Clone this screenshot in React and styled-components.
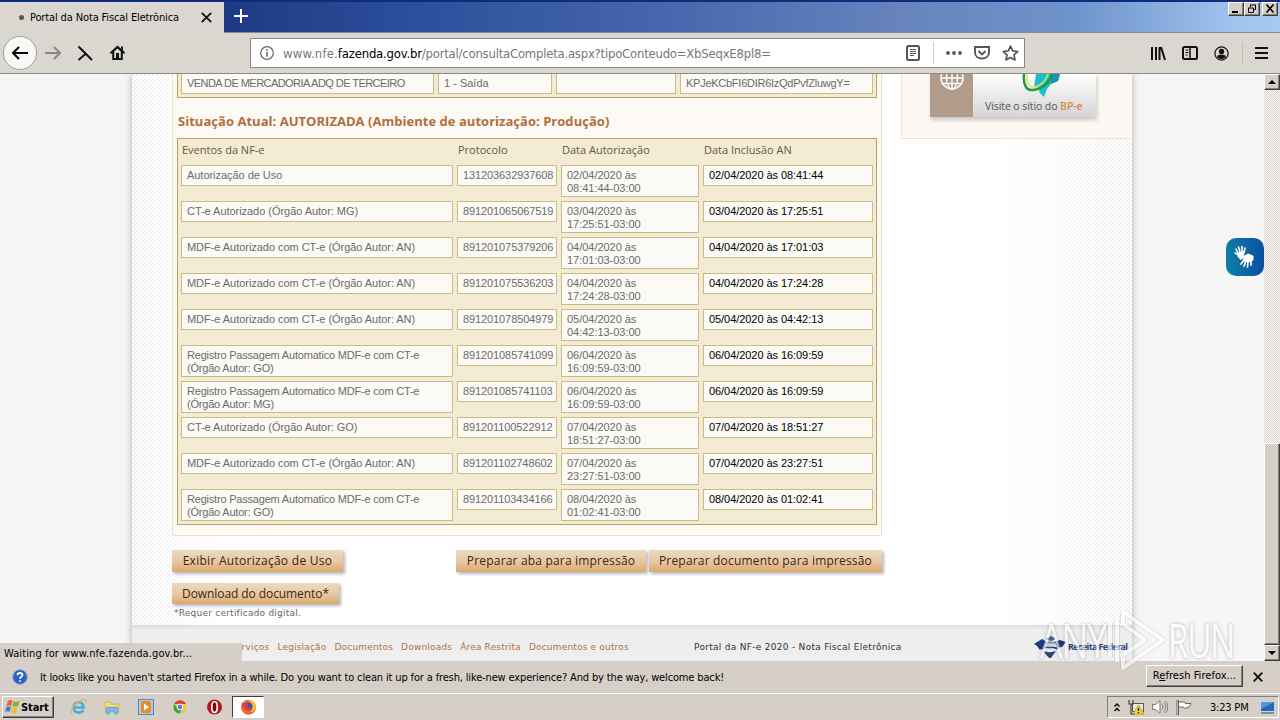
import React from "react";
import styled, { createGlobalStyle, css } from "styled-components";

const events = [
  ["Autorização de Uso", "131203632937608", "02/04/2020 às", "08:41:44-03:00", "02/04/2020 às 08:41:44"],
  ["CT-e Autorizado (Órgão Autor: MG)", "891201065067519", "03/04/2020 às", "17:25:51-03:00", "03/04/2020 às 17:25:51"],
  ["MDF-e Autorizado com CT-e (Órgão Autor: AN)", "891201075379206", "04/04/2020 às", "17:01:03-03:00", "04/04/2020 às 17:01:03"],
  ["MDF-e Autorizado com CT-e (Órgão Autor: AN)", "891201075536203", "04/04/2020 às", "17:24:28-03:00", "04/04/2020 às 17:24:28"],
  ["MDF-e Autorizado com CT-e (Órgão Autor: AN)", "891201078504979", "05/04/2020 às", "04:42:13-03:00", "05/04/2020 às 04:42:13"],
  ["Registro Passagem Automatico MDF-e com CT-e\n(Órgão Autor: GO)", "891201085741099", "06/04/2020 às", "16:09:59-03:00", "06/04/2020 às 16:09:59"],
  ["Registro Passagem Automatico MDF-e com CT-e\n(Órgão Autor: MG)", "891201085741103", "06/04/2020 às", "16:09:59-03:00", "06/04/2020 às 16:09:59"],
  ["CT-e Autorizado (Órgão Autor: GO)", "891201100522912", "07/04/2020 às", "18:51:27-03:00", "07/04/2020 às 18:51:27"],
  ["MDF-e Autorizado com CT-e (Órgão Autor: AN)", "891201102748602", "07/04/2020 às", "23:27:51-03:00", "07/04/2020 às 23:27:51"],
  ["Registro Passagem Automatico MDF-e com CT-e\n(Órgão Autor: GO)", "891201103434166", "08/04/2020 às", "01:02:41-03:00", "08/04/2020 às 01:02:41"],
];

const footerLinks = ["Serviços", "Legislação", "Documentos", "Downloads", "Área Restrita", "Documentos e outros"];

export default function App() {
  return (
    <Screen>
      <GlobalStyle />
      <TitleBar>
        <Tab>
          <TabDot />
          <TabTitle>Portal da Nota Fiscal Eletrônica</TabTitle>
          <CrossIcon size={11} width={1.6} />
        </Tab>
        <NewTab>
          <svg width="14" height="14" viewBox="0 0 14 14" stroke="#fff" strokeWidth="2">
            <path d="M7 0v14M0 7h14" />
          </svg>
        </NewTab>
        <WindowButtons>
          <WindowButton>
            <svg width="10" height="9"><path d="M1 8h6" stroke="#000" strokeWidth="2" /></svg>
          </WindowButton>
          <WindowButton>
            <svg width="10" height="9" fill="none" stroke="#000">
              <path d="M3 1h6M3.500 1v2M8.500 1v4.500H6.500M1 4h5.500M1.500 4v4.500h5V4" />
            </svg>
          </WindowButton>
          <WindowButton $gap>
            <svg width="10" height="9"><path d="M1.500 .5l7 8M8.500 .5l-7 8" stroke="#000" strokeWidth="1.600" /></svg>
          </WindowButton>
        </WindowButtons>
      </TitleBar>

      <NavBar>
        <BackButton>
          <ArrowIcon />
        </BackButton>
        <NavIcon $left={8} $faded>
          <ArrowIcon flip />
        </NavIcon>
        <NavIcon $left={16}>
          <svg width="16" height="16" fill="none" stroke="#111" strokeWidth="2">
            <path d="M1.500 1.500L15 15M9 8.500L1.500 15" />
          </svg>
        </NavIcon>
        <NavIcon $left={16}>
          <svg width="17" height="16" viewBox="0 0 17 16">
            <path d="M8.500 .5L.8 7.600l1.200 1.300 1.200-1V15h10.600V7.900l1.200 1 1.200-1.300L14 5.400V1.500h-2v2.200z" fill="#111" />
            <path d="M5.200 6.600L8.500 3.500l3.300 3.100v6.500H5.200z" fill="#dad7d1" />
            <path d="M7 8h3v5.500H7z" fill="#111" />
          </svg>
        </NavIcon>
        <UrlBar>
          <svg width="14" height="14" fill="none" stroke="#666">
            <circle cx="7" cy="7" r="6.300" strokeWidth="1.200" />
            <path d="M7 3.200v1.700M7 6v4.800" strokeWidth="1.600" />
          </svg>
          <Url>
            <UrlPrefix>www.nfe.</UrlPrefix>
            <UrlHost>fazenda.gov.br</UrlHost>
            <UrlPath>/portal/consultaCompleta.aspx?tipoConteudo=XbSeqxE8pl8=</UrlPath>
          </Url>
          <UrlActions>
            <svg width="14" height="16" fill="none" stroke="#555">
              <rect x="1" y="1" width="12" height="14" rx="1.500" strokeWidth="2" />
              <path d="M4 4.500h6M4 6.500h6M4 8.500h6M4 10.500h4" />
            </svg>
            <UrlDivider />
            <svg width="16" height="4" fill="#555">
              <circle cx="2" cy="2" r="1.900" /><circle cx="8" cy="2" r="1.900" /><circle cx="14" cy="2" r="1.900" />
            </svg>
            <svg width="16" height="14" fill="none" stroke="#555" strokeWidth="1.900">
              <path d="M1 1h14v5.500c0 8-14 8-14 0zM4.500 5L8 8.500 11.500 5" />
            </svg>
            <svg width="17" height="16" fill="none" stroke="#555" strokeWidth="1.700" strokeLinejoin="round">
              <path d="M8.500 1.200l2.200 4.700 5 .6-3.700 3.400 1 5-4.500-2.500L4 14.900l1-5L1.300 6.500l5-.6z" />
            </svg>
          </UrlActions>
        </UrlBar>
        <ToolbarIcons>
          <svg width="16" height="15" stroke="#111" strokeWidth="2">
            <path d="M2 1v13M6 1v13M9.500 1v13M11 1l4 13" />
          </svg>
          <svg width="16" height="14" fill="none" stroke="#111">
            <rect x="1" y="1" width="14" height="12" rx="1.500" strokeWidth="2" />
            <path d="M8 1v12" strokeWidth="1.500" /><path d="M3.500 4h3M3.500 6.500h3M3.500 9h2" />
          </svg>
          <svg width="15" height="15" fill="#111">
            <circle cx="7.500" cy="7.500" r="6.600" fill="none" stroke="#111" strokeWidth="1.200" />
            <circle cx="7.500" cy="5.500" r="2.700" />
            <path d="M3 11c.5-2 2-2.600 4.500-2.600S11.500 9 12 11c-2 2.600-7 2.600-9 0z" />
          </svg>
          <MenuDivider />
          <svg width="13" height="12" stroke="#111" strokeWidth="2">
            <path d="M0 1h13M0 6h13M0 11h13" />
          </svg>
        </ToolbarIcons>
      </NavBar>

      <Viewport>
        <PageArea>
          <Sheet>
            <SheetBody>
              <MainColumn>
                <MainPanel>
                  <InfoBox>
                    <Field $spacing={-0.55}>VENDA DE MERCADORIA ADQ DE TERCEIRO</Field>
                    <Field>1 - Saída</Field>
                    <Field />
                    <Field $spacing={-0.26}>KPJeKCbFI6DIR6IzQdPvfZluwgY=</Field>
                  </InfoBox>
                  <Status>Situação Atual: AUTORIZADA (Ambiente de autorização: Produção)</Status>
                  <EventsBox>
                    <EventsHead>
                      <span>Eventos da NF-e</span>
                      <span>Protocolo</span>
                      <span>Data Autorização</span>
                      <span>Data Inclusão AN</span>
                    </EventsHead>
                    {events.map((event) => (
                      <EventRow key={event[1]}>
                        <Field $spacing={event[0].includes("\n") ? -0.2 : -0.04}>{event[0]}</Field>
                        <Field $spacing={-0.1}>{event[1]}</Field>
                        <Field $spacing={-0.03}>{event[2] + "\n" + event[3]}</Field>
                        <Field $spacing={-0.06} $dark>{event[4]}</Field>
                      </EventRow>
                    ))}
                  </EventsBox>
                </MainPanel>
                <Actions>
                  <ActionButton $width={171} $spacing={0.28}>Exibir Autorização de Uso</ActionButton>
                  <ActionGroup>
                    <ActionButton $width={190}>Preparar aba para impressão</ActionButton>
                    <ActionButton $width={233}>Preparar documento para impressão</ActionButton>
                  </ActionGroup>
                </Actions>
                <ActionButton $width={167} $spacing={-0.08} $short>Download do documento*</ActionButton>
                <Note>*Requer certificado digital.</Note>
              </MainColumn>
              <SidePanel>
                <Banner>
                  <BannerIcon>
                    <svg width="24" height="24" fill="none" stroke="#fff" strokeWidth="1.400">
                      <circle cx="12" cy="12" r="11" />
                      <ellipse cx="12" cy="12" rx="5.500" ry="11" />
                      <path d="M12 1v22M1 12h22M3 6.500h18M3 17.500h18" />
                    </svg>
                  </BannerIcon>
                  <BannerBody>
                    <svg width="42" height="26" viewBox="0 0 42 26">
                      <path d="M14 0h24l-2 7-7 3-4 5-3 8-5-5 1-4-6-1z" fill="#18bfd0" />
                      <path d="M28 0h10l-2 7-7 3z" fill="#1597b4" />
                      <path d="M2 0c-1 10 2 17 9 16C21 15 28 8 30 0" fill="none" stroke="#1d9a43" strokeWidth="2.500" />
                      <path d="M5 0c-1 8 2 13 6 13C18 13 24 7 26 0" fill="none" stroke="#e3e04c" strokeWidth="1.500" />
                    </svg>
                    <BannerText>Visite o sítio do <b>BP-e</b></BannerText>
                  </BannerBody>
                </Banner>
              </SidePanel>
            </SheetBody>
            <Footer>
              <FooterLinks>
                {footerLinks.map((link) => <a key={link}>{link}</a>)}
              </FooterLinks>
              <FooterTitle>Portal da NF-e 2020 - Nota Fiscal Eletrônica</FooterTitle>
              <Receita>
                <svg width="32" height="22" viewBox="0 0 32 22">
                  <path d="M0 8l8-5 5 3-3 4-4 4-3-4z" fill="#1c3a7c" />
                  <path d="M11 3l6-3 5 3-5 2z" fill="#48688f" />
                  <path d="M20 6l6-2 6 2-4 5-5 1z" fill="#1c3a7c" />
                  <ellipse cx="16" cy="9" rx="5.500" ry="3.500" fill="#8298b8" />
                  <path d="M9 15c4 1.500 9 1.500 13 0l-5 7h-2z" fill="#284783" />
                  <path d="M7 13c5-3 12-3 17 0" fill="none" stroke="#284783" strokeWidth="2" />
                </svg>
                <span>Receita Federal</span>
              </Receita>
            </Footer>
          </Sheet>
          <StatusPopup>Waiting for www.nfe.fazenda.gov.br...</StatusPopup>
          <Libras>
            <svg width="22" height="24" viewBox="0 0 22 24" fill="#fff" stroke="#fff" strokeLinecap="round">
              <path d="M4 8l-2-4M6 7L4.500 2M8 7V1.500M10 8l1-5M5 10L1 8" strokeWidth="1.600" />
              <path d="M3.500 8l6-1.500L10 10l-3 5-3-3z" strokeWidth=".5" />
              <path d="M9 12l5-3 5 2v4l-4 2-5-1z" strokeWidth="1" />
              <path d="M10 15l-3 4M12 16l-2 5M14 16l-.5 6M17 15v5" strokeWidth="1.700" />
            </svg>
          </Libras>
        </PageArea>
        <Scrollbar>
          <ScrollButton><svg width="8" height="4"><path d="M0 4l4-4 4 4z" /></svg></ScrollButton>
          <ScrollTrack><ScrollThumb /></ScrollTrack>
          <ScrollButton><svg width="8" height="4"><path d="M0 0l4 4 4-4z" /></svg></ScrollButton>
        </Scrollbar>
      </Viewport>

      <Notification>
        <svg width="16" height="16">
          <circle cx="8" cy="8" r="7.300" fill="#2b62c4" stroke="#8ea7d4" />
          <path d="M5.500 6.300c0-3 5-3 5-.3 0 1.800-2.500 1.800-2.500 3.700M8 11.300v1.500" fill="none" stroke="#fff" strokeWidth="1.800" />
        </svg>
        <NotificationText>
          It looks like you haven't started Firefox in a while. Do you want to clean it up for a fresh, like-new experience? And by the way, welcome back!
        </NotificationText>
        <RefreshButton>R<u>e</u>fresh Firefox...</RefreshButton>
        <CrossIcon size={10} width={1.9} />
      </Notification>

      <Taskbar>
        <StartButton>
          <svg width="16" height="16" viewBox="0 0 16 16">
            <path d="M3 2c2-1.500 3-1 4.500-.2L6.300 7C4.800 6 3.300 6.300 1.500 7.200z" fill="#e8622a" />
            <path d="M8.500 2.300c2 1 3.500.8 6-.3l-1.500 5c-2 1-3.800 1-5.500.3z" fill="#79b33c" />
            <path d="M1.300 8.200c1.700-1 3.200-1 4.700-.2l-1.400 5C3.200 12 1.800 12.200 0 13z" fill="#3d7fd0" />
            <path d="M7.200 8.500c2 .9 3.500.8 5.500-.2l-1.500 5.200c-2 1-3.800.9-5.400 0z" fill="#f5bd2e" />
          </svg>
          <span>Start</span>
        </StartButton>
        <TaskIcon>
          <svg width="17" height="16" viewBox="0 0 17 16" fill="none">
            <path d="M4 8.500h9.500C13.500 1.500 3.700 1.500 3.700 8.500c0 6 7.500 6.500 9.500 2.500" stroke="#43aee0" strokeWidth="2.600" />
            <path d="M2 14.500C-2 10 11-1.500 15.500 1c1 .7.500 2.200 0 3" stroke="#e6b93e" strokeWidth="1.300" />
          </svg>
        </TaskIcon>
        <TaskIcon>
          <svg width="16" height="15">
            <path d="M1 2h6l1 2h7v8H1z" fill="#f0d67c" stroke="#d6b552" />
            <path d="M2.500 14V7.500h11V14h-3v-3h-5v3z" fill="#7cc0e8" stroke="#5aa2d2" />
          </svg>
        </TaskIcon>
        <TaskIcon>
          <svg width="16" height="16">
            <rect x=".5" y=".5" width="15" height="15" fill="#a8cdec" stroke="#5288c0" />
            <rect x="3" y="2" width="10" height="12" rx="2" fill="#f08a1c" />
            <path d="M6 4.500L11 8l-5 3.500z" fill="#fff" />
          </svg>
        </TaskIcon>
        <TaskIcon>
          <svg width="14" height="14">
            <circle cx="7" cy="7" r="6.500" fill="#f5c534" />
            <path d="M1.200 4A6.500 6.500 0 0 1 12.900 4H7z" fill="#dc4437" />
            <path d="M1.200 4A6.500 6.500 0 0 0 6.500 13.500L9 9 4 8z" fill="#35a253" />
            <circle cx="7" cy="7" r="3.200" fill="#fff" /><circle cx="7" cy="7" r="2.400" fill="#4a86e8" />
          </svg>
        </TaskIcon>
        <TaskIcon>
          <svg width="15" height="16">
            <circle cx="7.500" cy="8" r="7.500" fill="#b5171d" />
            <ellipse cx="7.500" cy="8" rx="2.700" ry="5.500" fill="#7a090c" stroke="#fff" strokeWidth="1.700" />
          </svg>
        </TaskIcon>
        <TaskIcon $active>
          <svg width="17" height="16">
            <circle cx="8.500" cy="8.300" r="7.500" fill="#f4662a" />
            <path d="M8 1c5 0 8 3 8 7-1 4-4 5-6 5 4-3 2-8-2-12z" fill="#fbbd2c" />
            <circle cx="8.500" cy="7.500" r="4" fill="#3458b4" />
            <path d="M1.500 5l2-2 2 1.500 3 .5-2 2c1 2 3 2 5 1-1 4-6 4-8 1z" fill="#ec3c3a" />
          </svg>
        </TaskIcon>
        <Tray>
          <svg width="6" height="9" fill="none" stroke="#000" strokeWidth="1.300">
            <path d="M.5 3.500L3 1l2.500 2.500M.5 8L3 5.500 5.500 8" />
          </svg>
          <svg width="16" height="16">
            <path d="M4.500 4.500h11v8h-11z" fill="#e8e8e8" stroke="#555" />
            <path d="M1 1v4h4V1M3 5v10h4" fill="none" stroke="#444" strokeWidth="1.200" />
            <path d="M10.500 6L16 15H5z" fill="#f8d62c" stroke="#a88a10" strokeWidth=".7" />
            <path d="M10.500 9v3M10.500 13v1" stroke="#000" strokeWidth="1.200" />
          </svg>
          <svg width="16" height="14" fill="none" stroke="#777">
            <path d="M.5 4.500h3L8 .8v12.400L3.500 9.500h-3z" fill="#fff" />
            <path d="M10 4.500c1.300 1 1.300 4 0 5M11.500 2.500c3 2 3 7 0 9M13.200 1c3.500 3 3.500 9 0 12" />
          </svg>
          <svg width="16" height="15" fill="#fff" stroke="#666">
            <path d="M1 .5h1.500V15H1zM2.500 2h6l.8 1.500H15L13 7l-4.500 1.500-1-1.500h-5z" />
          </svg>
          <Clock>3:23 PM</Clock>
          <svg width="15" height="13">
            <rect x=".5" y=".5" width="14" height="10" fill="#2467bb" stroke="#c3d6ea" />
            <path d="M1 1h13L1 8z" fill="#5795d8" /><path d="M1 12h13" stroke="#444" />
          </svg>
        </Tray>
      </Taskbar>

      <Watermark>
        <WatermarkWord $scale={0.77}>ANY</WatermarkWord>
        <svg width="62" height="66" viewBox="0 0 62 66" fill="none" strokeLinejoin="round">
          <path d="M17 5L57 33 17 61V50M17 17V5M17 17L39 33 17 48M4 16V50M11 11V55" stroke="#999" strokeWidth="6" opacity=".35" />
          <path d="M17 5L57 33 17 61V50M17 17V5M17 17L39 33 17 48M4 16V50M11 11V55" stroke="#fff" strokeWidth="4" />
        </svg>
        <WatermarkWord $scale={0.71}>RUN</WatermarkWord>
      </Watermark>
    </Screen>
  );
}

function CrossIcon({ size, width }) {
  return (
    <svg width={size} height={size} viewBox="0 0 10 10" stroke="#111" strokeWidth={width}>
      <path d="M.7 .7l8.600 8.600M9.300 .7L.7 9.300" />
    </svg>
  );
}

function ArrowIcon({ flip }) {
  return (
    <svg width="16" height="14" fill="none" stroke="currentColor" strokeWidth="2">
      <path d={flip ? "M0 7h14.500M9 1l6 6-6 6" : "M16 7H1.500M7 1L1 7l6 6"} />
    </svg>
  );
}

const GlobalStyle = createGlobalStyle`
  body {
    margin: 0;
    overflow: hidden;
  }
  * {
    box-sizing: border-box;
  }
  svg {
    display: block;
    flex: none;
  }
`;

const uiFont = css`
  font-family: "DejaVu Sans Condensed", "DejaVu Sans", sans-serif;
  font-stretch: condensed;
  font-size: 11px;
  white-space: nowrap;
`;

const raised = css`
  background: #d6cfc7;
  border: 1px solid;
  border-color: #fff #404040 #404040 #fff;
  box-shadow: inset -1px -1px #808080;
`;

const Screen = styled.div`
  position: relative;
  width: 1280px;
  height: 720px;
  display: flex;
  flex-direction: column;
  overflow: hidden;
  background: #d6cfc7;
  color: #000;
`;

const TitleBar = styled.div`
  height: 33px;
  flex: none;
  display: flex;
  border-top: 2px solid #0c2c7c;
  border-bottom: 1px solid #8a8a92;
  background: linear-gradient(90deg, #1f3a84 18%, #2a4b98 30%, #4667ae 52%, #6683bd 70%, #6f93cc 84%, #a0c5ef 97%, #a6caf0);
`;

const Tab = styled.div`
  width: 224px;
  height: 31px;
  display: flex;
  align-items: center;
  padding-left: 19px;
  background: #dad7d1;
`;

const TabDot = styled.div`
  width: 5px;
  height: 5px;
  border-radius: 50%;
  background: #555;
`;

const TabTitle = styled.div`
  ${uiFont}
  width: 177px;
  padding-left: 6px;
  letter-spacing: -0.13px;
`;

const NewTab = styled.div`
  padding: 7px 0 0 10px;
`;

const WindowButtons = styled.div`
  display: flex;
  margin-left: auto;
  margin-right: 2px;
`;

const WindowButton = styled.div`
  ${raised}
  width: 16px;
  height: 14px;
  padding: 1px 2px;
  margin-left: ${(props) => (props.$gap ? "2px" : "0")};
`;

const NavBar = styled.div`
  height: 41px;
  flex: none;
  display: flex;
  align-items: center;
  padding-left: 3px;
  background: #dad7d1;
  border-bottom: 1px solid #8c8a87;
`;

const BackButton = styled.div`
  width: 34px;
  height: 34px;
  display: flex;
  align-items: center;
  justify-content: center;
  border: 1px solid #a19f9b;
  border-radius: 50%;
  background: #f8f8f7;
`;

const NavIcon = styled.div`
  margin-left: ${(props) => props.$left}px;
  color: ${(props) => (props.$faded ? "#8a8885" : "#111")};
`;

const UrlBar = styled.div`
  width: 775px;
  height: 30px;
  display: flex;
  align-items: center;
  margin-left: 124px;
  padding-left: 9px;
  border: 1px solid #8c8a87;
  background: #fff;
`;

const Url = styled.div`
  ${uiFont}
  display: flex;
  width: 629px;
  padding-left: 9px;
  font-size: 13px;
  color: #777;
`;

const UrlPrefix = styled.span`
  letter-spacing: 0.15px;
`;

const UrlHost = styled.span`
  color: #000;
  letter-spacing: -0.2px;
`;

const UrlPath = styled.span`
  letter-spacing: -0.23px;
`;

const UrlActions = styled.div`
  display: flex;
  align-items: center;
  gap: 12px;
  padding-left: 3px;
`;

const UrlDivider = styled.div`
  width: 1px;
  height: 22px;
  margin-left: 1px;
  background: #d0d0d0;
`;

const ToolbarIcons = styled.div`
  display: flex;
  align-items: center;
  gap: 16px;
  margin-left: 125px;
`;

const MenuDivider = styled.div`
  width: 1px;
  height: 22px;
  margin: 0 -4px 0 -3px;
  background: #c1beb8;
`;

const Viewport = styled.div`
  height: 587px;
  flex: none;
  display: flex;
`;

const PageArea = styled.div`
  position: relative;
  width: 1264px;
  overflow: hidden;
  display: flex;
  justify-content: center;
  background: #f6f6f6;
`;

const Sheet = styled.div`
  width: 1000px;
  display: flex;
  flex-direction: column;
  box-shadow: 0 0 7px rgba(0, 0, 0, 0.3);
  background:
    linear-gradient(90deg, rgba(255, 255, 255, 0.2) 0, #fff 90px, #fff 860px, rgba(255, 255, 255, 0.2)),
    radial-gradient(circle at 1px 1px, #ebebeb 0.800px, transparent 1.200px) 0 0 / 4px 4px,
    radial-gradient(circle at 3px 3px, #ededed 0.800px, transparent 1.200px) 0 0 / 4px 4px,
    #fff;
`;

const SheetBody = styled.div`
  height: 551px;
  display: flex;
  align-items: flex-start;
  padding-left: 40px;
  gap: 19px;
`;

const MainColumn = styled.div`
  width: 710px;
  display: flex;
  flex-direction: column;
`;

const MainPanel = styled.div`
  height: 462px;
  padding: 0 4px;
  border: 1px solid #eee3c8;
  border-top: 0;
  background: #fdfaf6;
`;

const InfoBox = styled.div`
  height: 24px;
  display: grid;
  grid-template-columns: 253px 114px 120px 193px;
  gap: 4px;
  padding: 0 3px 3px;
  border: 1px solid #b9a261;
  border-top: 0;
  background: #f3ebd3;
  > div {
    border-top: 0;
  }
`;

const Field = styled.div`
  min-height: 20px;
  padding: 3px 0 1px 5px;
  border: 1px solid #cbbb88;
  background: #fbfaf5;
  font: 11px/13px "Liberation Sans", Arial, sans-serif;
  letter-spacing: ${(props) => props.$spacing || 0}px;
  color: ${(props) => (props.$dark ? "#000" : "#6b6b6b")};
  white-space: pre;
`;

const Status = styled.div`
  height: 40px;
  padding-left: 1px;
  font: bold 13px/47px "Open Sans", sans-serif;
  letter-spacing: 0.03px;
  white-space: nowrap;
  color: #b06f3c;
`;

const EventsBox = styled.div`
  height: 387px;
  display: flex;
  flex-direction: column;
  gap: 4px;
  padding: 0 3px;
  border: 1px solid #b9a261;
  background: #f3ebd3;
`;

const EventsHead = styled.div`
  height: 22px;
  display: grid;
  grid-template-columns: 272px 100px 138px 170px;
  gap: 4px;
  padding-left: 1px;
  font: 11px/21px "Open Sans", sans-serif;
  color: #66593b;
`;

const EventRow = styled.div`
  height: 32px;
  display: grid;
  grid-template-columns: 272px 100px 138px 170px;
  gap: 4px;
  align-items: start;
  ${Field} {
    min-height: 21px;
  }
`;

const Actions = styled.div`
  display: flex;
  justify-content: space-between;
  padding: 14px 0 11px;
`;

const ActionGroup = styled.div`
  display: flex;
  gap: 3px;
`;

const ActionButton = styled.div`
  width: ${(props) => props.$width}px;
  height: ${(props) => (props.$short ? 21 : 22)}px;
  text-align: center;
  background: linear-gradient(#ecd9c2, #e8c9a3 50%, #dba970);
  box-shadow: 2px 2px 3px rgba(90, 90, 110, 0.45);
  font: 12px/21px "Open Sans", sans-serif;
  letter-spacing: ${(props) => props.$spacing || 0.18}px;
  white-space: nowrap;
  color: #3c2614;
`;

const Note = styled.div`
  padding: 3px 0 0 2px;
  font: 9px/12px "DejaVu Sans", sans-serif;
  letter-spacing: 0.23px;
  color: #666;
`;

const SidePanel = styled.div`
  width: 231px;
  height: 65px;
  padding-left: 28px;
  border: solid #f0e3cc;
  border-width: 0 0 1px 1px;
  background: #fcf9f5;
`;

const Banner = styled.div`
  width: 166px;
  height: 43px;
  display: flex;
  box-shadow: 1px 3px 4px rgba(0, 0, 0, 0.2);
`;

const BannerIcon = styled.div`
  width: 43px;
  overflow: hidden;
  background: #b19c8c;
  svg {
    margin: -8px 0 0 10px;
  }
`;

const BannerBody = styled.div`
  flex: 1;
  background: linear-gradient(#fff, #d6d4d6);
  svg {
    margin-left: 49px;
  }
`;

const BannerText = styled.div`
  padding-left: 12px;
  font: 10.5px/12px "Open Sans", sans-serif;
  letter-spacing: -0.08px;
  white-space: nowrap;
  color: #555;
  b {
    font-weight: 600;
    color: #d98a4a;
  }
`;

const Footer = styled.div`
  height: 36px;
  display: flex;
  align-items: center;
  padding-top: 8px;
  font: 9px/12px "DejaVu Sans", sans-serif;
  white-space: nowrap;
  background: linear-gradient(#dcdcdc, #eee 5px);
`;

const FooterLinks = styled.div`
  width: 562px;
  display: flex;
  gap: 8px;
  padding-left: 98px;
  letter-spacing: 0.18px;
  color: #ad734b;
`;

const FooterTitle = styled.div`
  width: 340px;
  letter-spacing: 0.29px;
  color: #333;
`;

const Receita = styled.div`
  display: flex;
  align-items: center;
  gap: 2px;
  font: bold 9px/12px "Open Sans", sans-serif;
  letter-spacing: -0.65px;
  color: #2a4381;
`;

const StatusPopup = styled.div`
  ${uiFont}
  position: absolute;
  left: 0;
  bottom: 0;
  width: 242px;
  height: 18px;
  padding-left: 4px;
  line-height: 21px;
  letter-spacing: 0.11px;
  background: #d6cfc7;
`;

const Libras = styled.div`
  position: absolute;
  top: 164px;
  right: 0;
  width: 38px;
  height: 38px;
  display: flex;
  align-items: center;
  justify-content: center;
  border-radius: 10px;
  background: linear-gradient(90deg, #0f7fa6, #0b4fa0);
`;

const Scrollbar = styled.div`
  width: 16px;
  display: flex;
  flex-direction: column;
`;

const ScrollButton = styled.div`
  ${raised}
  height: 16px;
  display: flex;
  align-items: center;
  justify-content: center;
`;

const ScrollTrack = styled.div`
  flex: 1;
  display: flex;
  padding-top: 353px;
  background: repeating-conic-gradient(#fff 0 25%, #d6cfc7 0 50%) 0 0 / 2px 2px;
`;

const ScrollThumb = styled.div`
  ${raised}
  width: 16px;
  height: 202px;
`;

const Notification = styled.div`
  height: 32px;
  flex: none;
  display: flex;
  align-items: center;
  padding-left: 12px;
`;

const NotificationText = styled.div`
  ${uiFont}
  width: 1118px;
  padding-left: 12px;
  letter-spacing: -0.145px;
`;

const RefreshButton = styled.div`
  ${uiFont}
  ${raised}
  width: 97px;
  height: 22px;
  margin: -2px 10px 0 0;
  text-align: center;
  line-height: 20px;
  letter-spacing: 0.05px;
`;

const Taskbar = styled.div`
  height: 27px;
  flex: none;
  display: flex;
  align-items: center;
  padding: 0 1px 0 2px;
  border-top: 1px solid #fff;
`;

const StartButton = styled.div`
  ${uiFont}
  ${raised}
  width: 52px;
  height: 22px;
  display: flex;
  align-items: center;
  padding-left: 2px;
  margin-right: 8px;
  font-weight: bold;
  letter-spacing: -0.1px;
`;

const TaskIcon = styled.div`
  width: 32px;
  height: 22px;
  display: flex;
  align-items: center;
  justify-content: center;
  margin-right: ${(props) => (props.$active ? 0 : 2)}px;
  ${(props) =>
    props.$active &&
    css`
      background: #fff;
      border: 1px solid;
      border-color: #404040 #fff #fff #404040;
    `}
`;

const Tray = styled.div`
  width: 172px;
  height: 22px;
  display: flex;
  align-items: center;
  gap: 8px;
  margin-left: auto;
  padding-left: 6px;
  border: 1px solid;
  border-color: #808080 #fff #fff #808080;
`;

const Clock = styled.div`
  ${uiFont}
  width: 42px;
  margin-left: 10px;
  letter-spacing: -0.2px;
`;

const Watermark = styled.div`
  position: absolute;
  left: 1040px;
  top: 607px;
  display: flex;
  align-items: center;
  opacity: 0.6;
  pointer-events: none;
  font: 47px/66px "Open Sans", sans-serif;
  color: #fff;
  text-shadow: 0 0 4px rgba(0, 0, 0, 0.45);
`;

const WatermarkWord = styled.span`
  width: 66px;
  white-space: nowrap;
  letter-spacing: -2px;
  transform: scaleX(${(props) => props.$scale});
  transform-origin: left;
`;
